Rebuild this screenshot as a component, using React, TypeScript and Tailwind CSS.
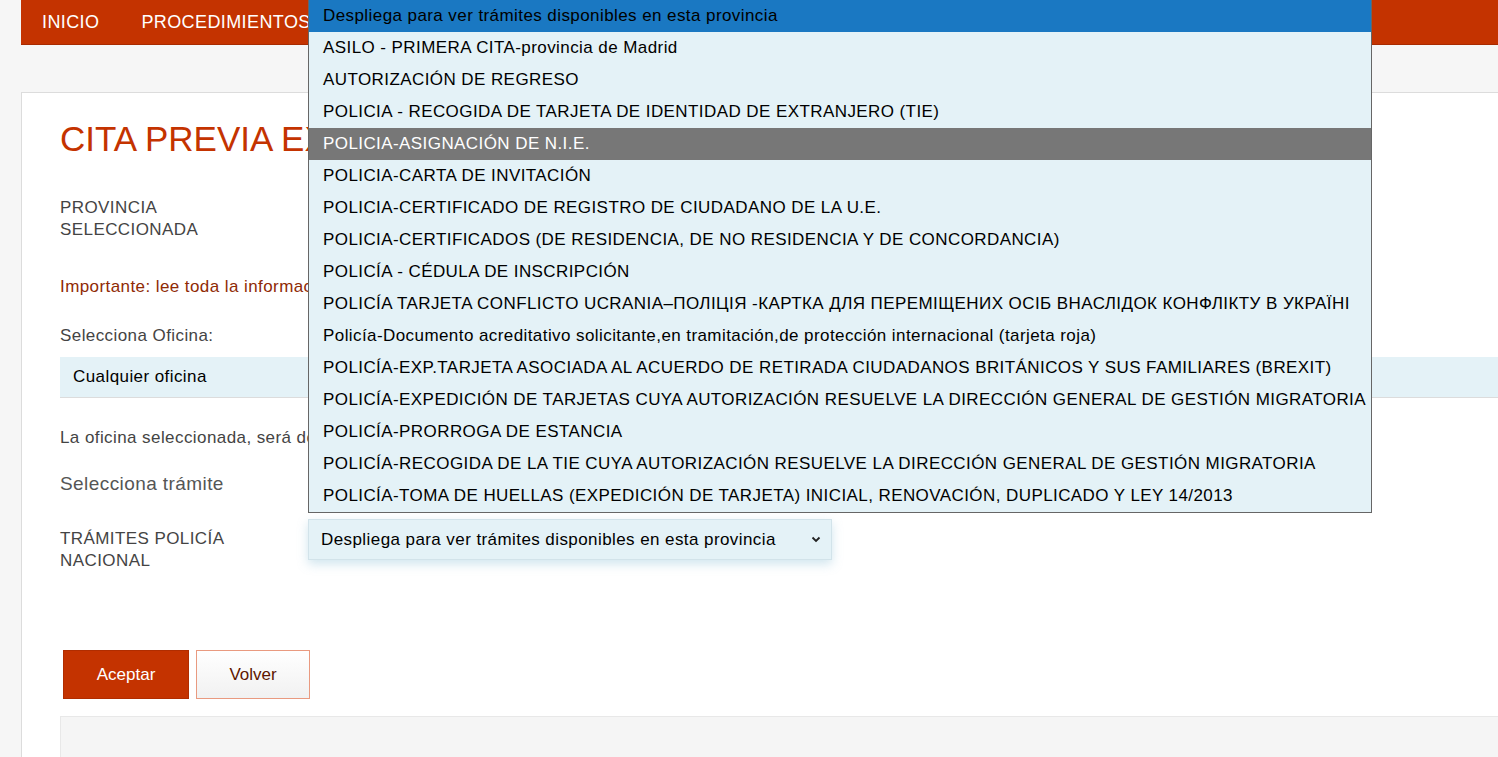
import React from "react";

const tramites: string[] = [
  "ASILO - PRIMERA CITA-provincia de Madrid",
  "AUTORIZACIÓN DE REGRESO",
  "POLICIA - RECOGIDA DE TARJETA DE IDENTIDAD DE EXTRANJERO (TIE)",
  "POLICIA-ASIGNACIÓN DE N.I.E.",
  "POLICIA-CARTA DE INVITACIÓN",
  "POLICIA-CERTIFICADO DE REGISTRO DE CIUDADANO DE LA U.E.",
  "POLICIA-CERTIFICADOS (DE RESIDENCIA, DE NO RESIDENCIA Y DE CONCORDANCIA)",
  "POLICÍA - CÉDULA DE INSCRIPCIÓN",
  "POLICÍA TARJETA CONFLICTO UCRANIA–ПОЛІЦІЯ -КАРТКА ДЛЯ ПЕРЕМІЩЕНИХ ОСІБ ВНАСЛІДОК КОНФЛІКТУ В УКРАЇНІ",
  "Policía-Documento acreditativo solicitante,en tramitación,de protección internacional (tarjeta roja)",
  "POLICÍA-EXP.TARJETA ASOCIADA AL ACUERDO DE RETIRADA CIUDADANOS BRITÁNICOS Y SUS FAMILIARES (BREXIT)",
  "POLICÍA-EXPEDICIÓN DE TARJETAS CUYA AUTORIZACIÓN RESUELVE LA DIRECCIÓN GENERAL DE GESTIÓN MIGRATORIA",
  "POLICÍA-PRORROGA DE ESTANCIA",
  "POLICÍA-RECOGIDA DE LA TIE CUYA AUTORIZACIÓN RESUELVE LA DIRECCIÓN GENERAL DE GESTIÓN MIGRATORIA",
  "POLICÍA-TOMA DE HUELLAS (EXPEDICIÓN DE TARJETA) INICIAL, RENOVACIÓN, DUPLICADO Y LEY 14/2013",
];

const placeholder = "Despliega para ver trámites disponibles en esta provincia";
const hovered = "POLICIA-ASIGNACIÓN DE N.I.E.";

const App: React.FC = () => {
  return (
    <div className="relative min-h-[757px] w-full overflow-hidden bg-[#f6f6f6] font-['Liberation_Sans',Arial,sans-serif] text-[17px] tracking-[0.42px] text-[#444]">
      <div className="ml-[21px] w-[1540px]">
        {/* top navigation */}
        <nav className="flex h-[45px] items-center gap-[42px] border-b border-[#a82a00] bg-[#c43300] pl-[21px] text-[18px] tracking-[0.4px] text-white">
          <span>INICIO</span>
          <span>PROCEDIMIENTOS</span>
        </nav>

        <div className="mt-[47px] border-l border-t border-[#dcdcdc] bg-white pl-[38px] pt-[26px]">
          <h1 className="whitespace-nowrap text-[35px] leading-[40px] tracking-normal text-[#c43300]">
            CITA PREVIA EXTRANJERÍA
          </h1>

          <div className="mt-[38px] grid grid-cols-[248px_1fr] leading-[22px]">
            <div className="max-w-[210px]">PROVINCIA SELECCIONADA</div>
            <div className="-mt-[9px] h-[42px] w-[520px] border border-[#ddd] bg-white" />
          </div>

          <p className="mt-[35px] whitespace-nowrap leading-[22px] text-[#8f2a05]">
            Importante: lee toda la información que aparece en esta página antes de continuar.
          </p>

          <p className="mt-[27px] leading-[22px]">Selecciona Oficina:</p>
          <div className="mt-[10px] flex h-[41px] items-center border-b border-[#dcdcdc] bg-[#e4f2f7] pl-[13px] text-black">
            Cualquier oficina
          </div>

          <p className="mt-[29px] whitespace-nowrap leading-[22px]">
            La oficina seleccionada, será donde tendrás que acudir el día de la cita.
          </p>

          <p className="mt-[23px] text-[19px] leading-[24px] text-[#555]">Selecciona trámite</p>

          <div className="mt-[23px] grid grid-cols-[248px_1fr] leading-[22px]">
            <div className="max-w-[210px] pt-[9px]">TRÁMITES POLICÍA NACIONAL</div>
            <div className="flex h-[41px] w-[524px] items-center justify-between border border-[#d2e3ea] bg-[#e4f2f7] pl-[12px] pr-[10px] text-black shadow-[0_4px_10px_rgba(120,180,205,0.35)]">
              <span>{placeholder}</span>
              <svg width="10" height="7" viewBox="0 0 10 7" fill="none">
                <path d="M1.5 1.5 5 5 8.5 1.5" stroke="#222" strokeWidth="1.8" />
              </svg>
            </div>
          </div>

          <div className="ml-[3px] mt-[78px] flex gap-[7px] tracking-normal">
            <button className="h-[49px] w-[126px] border border-[#b02d00] bg-[#c43300] text-[17px] text-white">
              Aceptar
            </button>
            <button className="h-[49px] w-[114px] border border-[#e99a80] bg-gradient-to-b from-white to-[#f1f1f1] text-[17px] text-[#5e1600]">
              Volver
            </button>
          </div>

          <div className="mt-[17px] h-[60px] border border-[#e8e8e8] bg-[#f5f5f5]" />
        </div>
      </div>

      {/* open option list of the trámites select */}
      <ul className="absolute left-[308px] top-[-1px] z-10 w-[1064px] border border-[#666] bg-[#e4f2f7] text-black">
        <li className="flex h-[32px] items-center bg-[#1a78c2] pl-[14px]">{placeholder}</li>
        {tramites.map((t) => (
          <li
            key={t}
            className={`flex h-[32px] items-center whitespace-nowrap pl-[14px] ${
              t === hovered ? "bg-[#777] text-white" : ""
            }`}
          >
            {t}
          </li>
        ))}
      </ul>
    </div>
  );
};

export default App;
